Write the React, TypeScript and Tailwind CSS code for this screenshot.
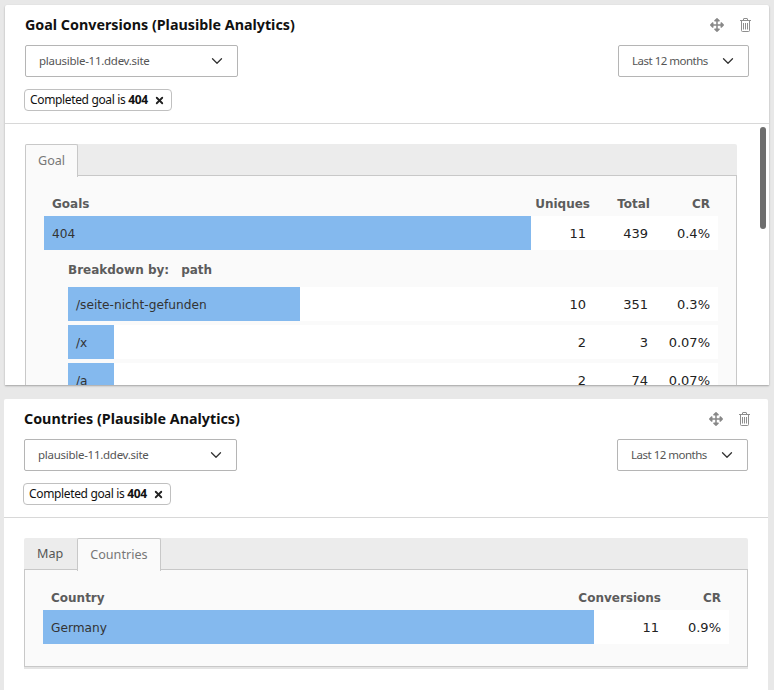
import React from "react";
import { ChevronDown, X } from "lucide-react";
import { FaArrowsAlt } from "react-icons/fa";

const ui = "font-['Noto_Sans','Open_Sans',sans-serif]";
const tbl = "font-['DejaVu_Sans',sans-serif]";

function Trash() {
  return (
    <svg width="11" height="14" viewBox="0 0 11 14" fill="none" stroke="#8e8e8e" strokeWidth="1">
      <path d="M0 2.5H11M1.5 2.5V12.5a1 1 0 0 0 1 1H8.500a1 1 0 0 0 1-1V2.500M3.500 2.500V1a.5.5 0 0 1 .5-.5H7a.5.5 0 0 1 .5.5V2.500M3.500 5V11.500M5.500 5V11.500M7.500 5V11.500" />
    </svg>
  );
}

function Select({ label, width, track }: { label: string; width: string; track: string }) {
  return (
    <div className={`flex h-8 items-center justify-between rounded-[2px] border border-[#b5b5b5] bg-white pl-[13px] pr-[11px] text-[11.5px] text-[#555] ${width}`}>
      <span className={track}>{label}</span>
      <ChevronDown size={18} strokeWidth={1.7} className="text-[#333]" />
    </div>
  );
}

function Header({ title }: { title: string }) {
  return (
    <div className={`border-b border-[#d8d8d8] px-5 pb-3 ${ui}`}>
      <div className="flex items-start justify-between pt-[10px]">
        <h2 className="text-[14.3px] leading-[20px] font-bold text-[#111]">{title}</h2>
        <div className="-mr-[2px] mt-[3px] flex items-center gap-[16px]">
          <FaArrowsAlt size={14} className="text-[#888]" />
          <Trash />
        </div>
      </div>
      <div className="mt-[10px] flex justify-between">
        <Select label="plausible-11.ddev.site" width="w-[213px]" track="tracking-[-0.27px]" />
        <Select label="Last 12 months" width="w-[131px]" track="tracking-[-0.5px]" />
      </div>
      <div className="-ml-px mt-[12px] inline-flex h-[22px] items-center gap-[6px] rounded-[4px] border border-[#c0c0c0] bg-white pl-[5px] pr-[6px] text-[12px] tracking-[-0.35px] text-[#111]">
        <span>
          Completed goal is <b>404</b>
        </span>
        <X size={11} strokeWidth={4} className="text-[#222]" />
      </div>
    </div>
  );
}

function Tabs({ items, active }: { items: string[]; active: string }) {
  return (
    <div className={`flex h-8 rounded-t-[2px] bg-[#ececec] text-[12.6px] ${ui}`}>
      {items.map((t) =>
        t === active ? (
          <div key={t} className="relative z-10 flex h-[33px] items-center rounded-t-[2px] border border-b-0 border-[#c8c8c8] bg-[#fafafa] px-[12px] text-[#777]">
            {t}
          </div>
        ) : (
          <div key={t} className="flex items-center border-b border-[#c8c8c8] pl-[13px] pr-[14px] pt-[2px] text-[#555]">
            {t}
          </div>
        ),
      )}
      <div className="flex-1 border-b border-[#c8c8c8]" />
    </div>
  );
}

function Row({ label, barW, cells, ml = "" }: { label: string; barW: string; cells: React.ReactNode; ml?: string }) {
  return (
    <div className={`flex h-[34px] bg-white text-[#333] ${ml}`}>
      <div className={`flex items-center bg-[#84b9ee] pl-2 pt-[2px] text-[12.2px] ${barW}`}>{label}</div>
      <div className="flex flex-1 items-center justify-end pt-[1px] text-[13px]">{cells}</div>
    </div>
  );
}

const Num = ({ w, children }: { w: string; children: React.ReactNode }) => (
  <span className={`text-right text-[#222] ${w}`}>{children}</span>
);

function GoalCells(a: string, b: string, c: string) {
  return (
    <>
      <Num w="w-[50px]">{a}</Num>
      <Num w="w-[62px]">{b}</Num>
      <Num w="w-[62px] mr-[8px]">{c}</Num>
    </>
  );
}

export default function App() {
  return (
    <div className="h-[690px] overflow-hidden bg-[#e8e8e8]">
      <section className="relative ml-[5px] mt-[5px] h-[380px] w-[764px] overflow-hidden rounded-t-[2px] bg-white shadow-[0_1px_2px_rgba(0,0,0,0.3)]">
        <Header title="Goal Conversions (Plausible Analytics)" />
        <div className="absolute right-[3px] top-[122px] h-[102px] w-[6px] rounded-full bg-[#6e6e6e]" />
        <div className="ml-5 mr-[32px] mt-5">
          <Tabs items={["Goal"]} active="Goal" />
          <div className={`border-x border-[#c8c8c8] bg-[#fafafa] pl-[18px] pr-[18px] pt-[20px] ${tbl}`}>
            <div className="flex h-[20px] items-start text-[12px] font-bold leading-[16px] text-[#5c5c5c]">
              <span className="ml-2 flex-1">Goals</span>
              <span className="w-[56px] text-right">Uniques</span>
              <span className="w-[60px] text-right">Total</span>
              <span className="mr-2 w-[60px] text-right">CR</span>
            </div>
            <Row label="404" barW="w-[487px]" cells={GoalCells("11", "439", "0.4%")} />
            <div className="ml-6 flex h-[37px] items-center gap-3 pt-[2px] text-[12px] font-bold text-[#5c5c5c]">
              <span>Breakdown by:</span>
              <span>path</span>
            </div>
            <div className="flex flex-col gap-1">
              <Row ml="ml-6" label="/seite-nicht-gefunden" barW="w-[232px]" cells={GoalCells("10", "351", "0.3%")} />
              <Row ml="ml-6" label="/x" barW="w-[46px]" cells={GoalCells("2", "3", "0.07%")} />
              <Row ml="ml-6" label="/a" barW="w-[46px]" cells={GoalCells("2", "74", "0.07%")} />
            </div>
          </div>
        </div>
      </section>

      <section className="ml-1 mt-[14px] h-[300px] w-[764px] rounded-t-[2px] bg-white">
        <Header title="Countries (Plausible Analytics)" />
        <div className="ml-5 mr-[20px] mt-5">
          <Tabs items={["Map", "Countries"]} active="Countries" />
          <div className={`border-x border-b border-[#c8c8c8] bg-[#fafafa] pb-[22px] pl-[18px] pr-[18px] pt-[20px] shadow-[0_2px_0_#e4e4e4] ${tbl}`}>
            <div className="flex h-[20px] items-start text-[12px] font-bold leading-[16px] text-[#5c5c5c]">
              <span className="ml-2 flex-1">Country</span>
              <span className="text-right">Conversions</span>
              <span className="mr-2 w-[60px] text-right">CR</span>
            </div>
            <Row
              label="Germany"
              barW="w-[551px]"
              cells={
                <>
                  <Num w="w-[30px]">11</Num>
                  <Num w="w-[62px] mr-[8px]">0.9%</Num>
                </>
              }
            />
          </div>
        </div>
      </section>
    </div>
  );
}
